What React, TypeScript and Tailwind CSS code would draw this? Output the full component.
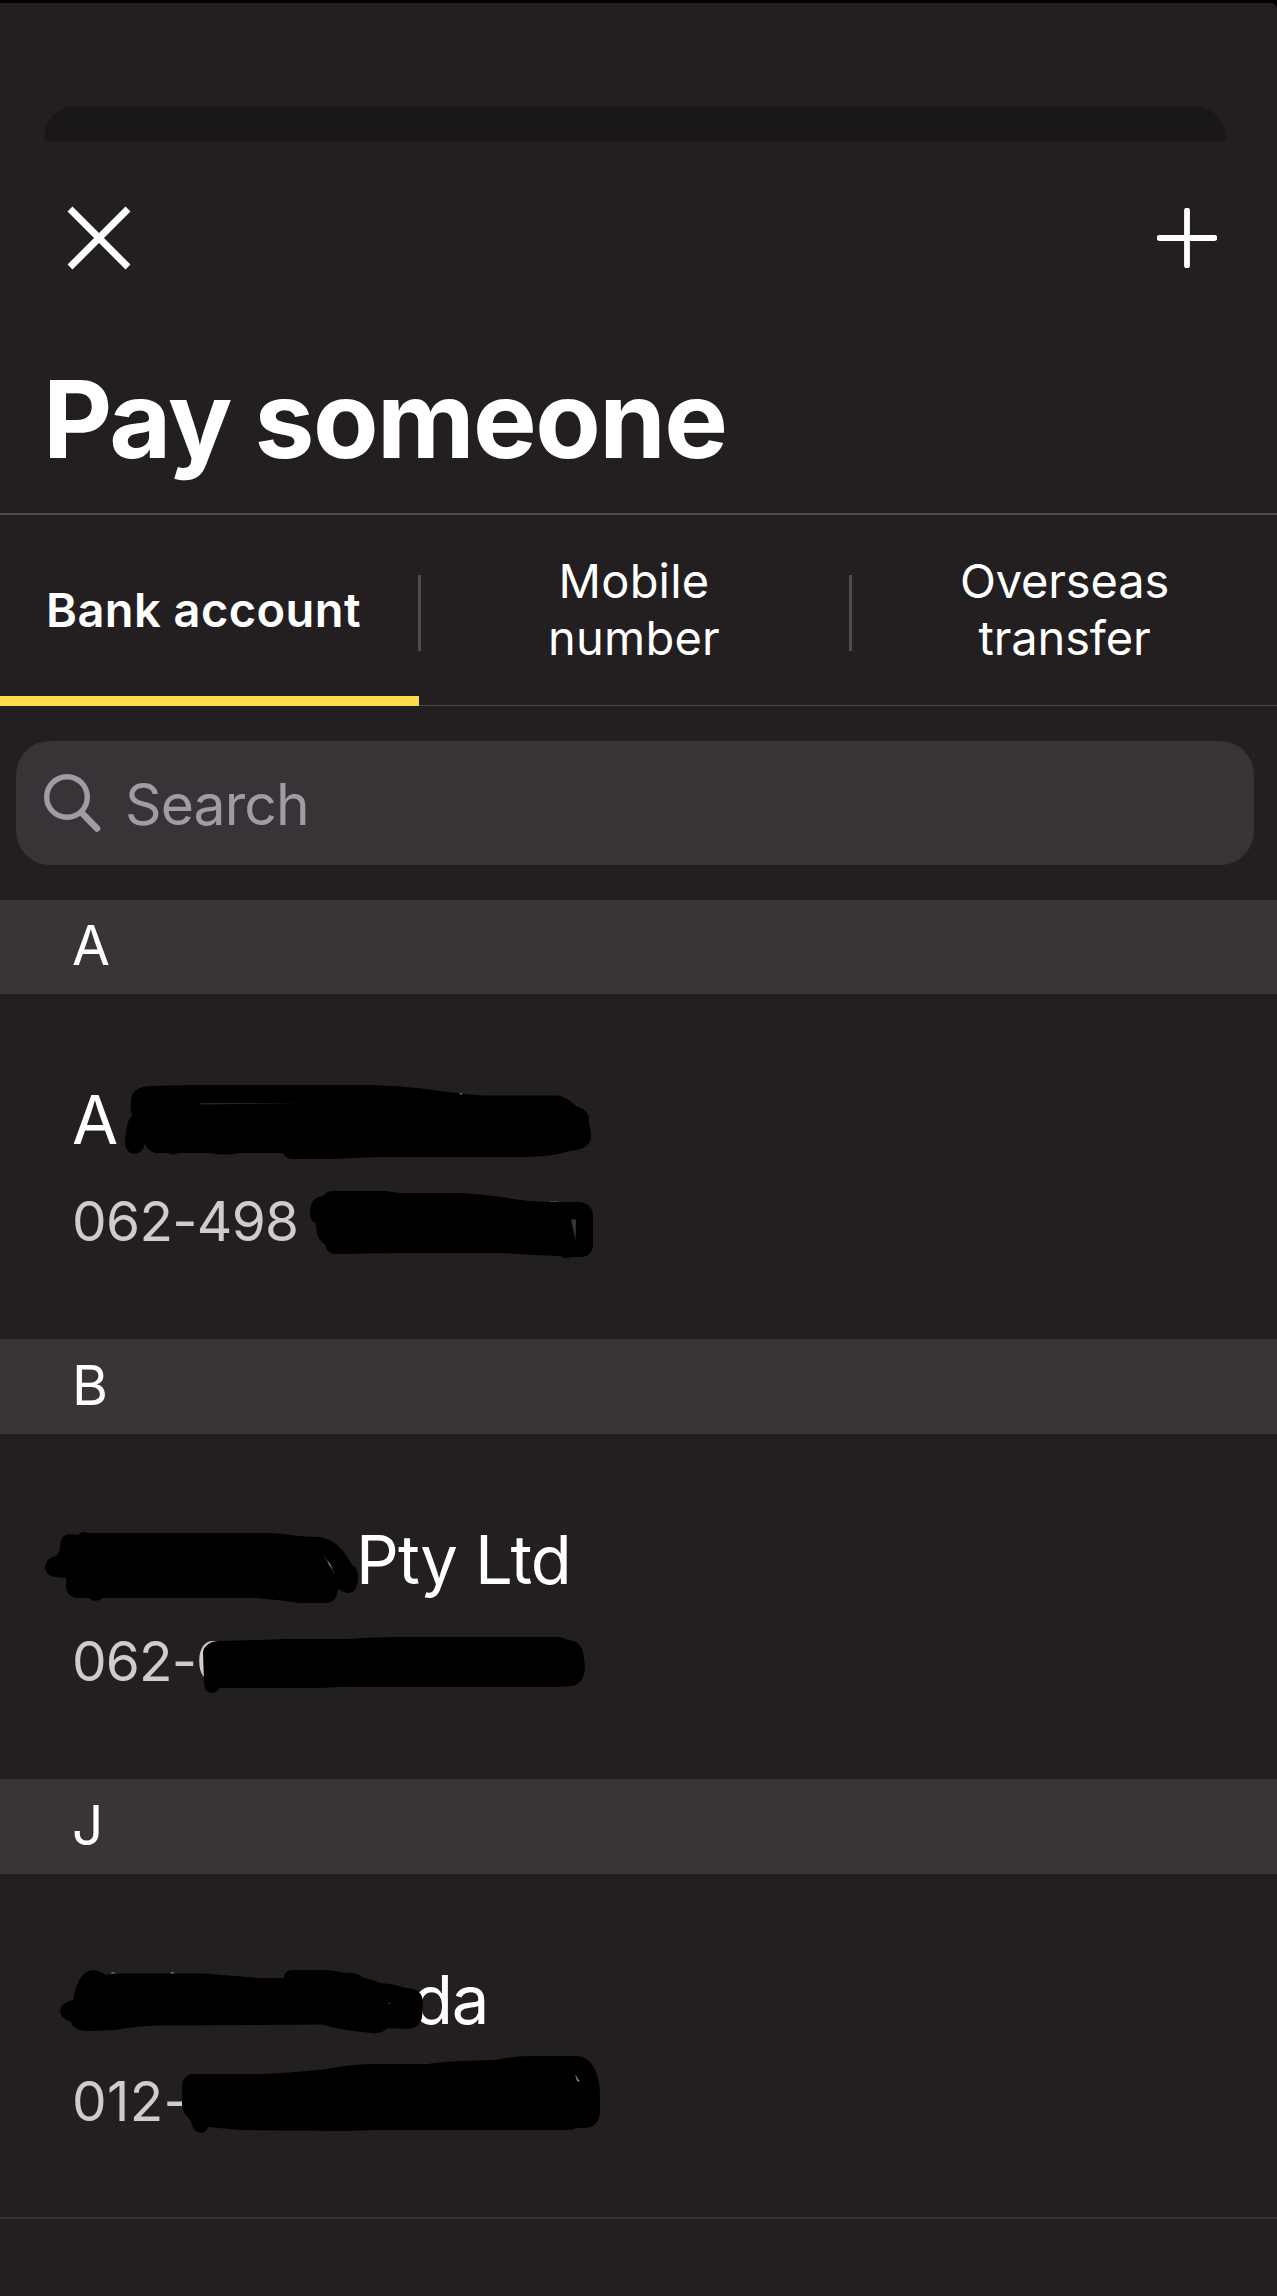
type Payee = {
  letter: string;
  name: string;
  nameClass: string;
  account: string;
  accountClass: string;
  headerClass: string;
  rowClass: string;
  viewBox: string;
  marks: string[];
  gaps: { d: string; fill: string }[];
};

const tabs = [
  { label: ['Bank account'], active: true, className: 'w-[418px] items-start pl-[46px] tracking-[0.43px]' },
  { label: ['Mobile', 'number'], active: false, className: 'w-[428px] items-center pr-[2px] pb-[2px] tracking-[0.2px]' },
  { label: ['Overseas', 'transfer'], active: false, className: 'flex-1 items-center pb-[2px] tracking-[-0.15px]' },
];

const payees: Payee[] = [
  {
    letter: 'A',
    name: 'A',
    nameClass: 'pl-[72px]',
    account: '062-498',
    accountClass: 'tracking-[-0.7px]',
    headerClass: 'h-[94px]',
    rowClass: 'h-[345px]',
    viewBox: '0 994 1277 345',
    marks: [
      'M131 1100Q132 1087 150 1086L190 1085H370C420 1086 450 1094 485 1095.5H558Q567 1097 576 1106Q590 1110 589 1122Q591 1130 591 1138Q590 1149 570 1151Q555 1156 530 1157H380L330 1159H292Q285 1158 283 1153H240Q225 1156 210 1153H178Q173 1156 168 1153H155Q146 1150 145 1143Q143 1154 134 1154Q125 1152 125 1143Q126 1120 132 1116Q130 1108 131 1100Z',
      'M310 1213Q310 1197 323 1196Q327 1191 332 1191H385L400 1193H460Q485 1194 520 1200Q540 1202 555 1202H580Q593 1204 593 1217V1245Q592 1257 580 1257H571Q566 1260 560 1256Q530 1255 500 1253H400L340 1254Q326 1255 325 1244Q316 1240 316 1223Q310 1221 310 1213Z',
    ],
    gaps: [
      { d: 'M199 1103L300 1103L202 1104.6Z', fill: '#2b2728' },
      { d: 'M571 1219.5H576L575.5 1240Z', fill: '#3a3637' },
      { d: 'M459 1093H463L461 1095Z', fill: '#666263' },
      { d: 'M550 1201H558V1202H550Z', fill: '#4a4647' },
    ],
  },
  {
    letter: 'B',
    name: 'Pty Ltd',
    nameClass: 'pl-[356px] tracking-[-0.9px]',
    account: '062-0',
    accountClass: 'tracking-[-0.9px]',
    headerClass: 'h-[95px]',
    rowClass: 'h-[345px]',
    viewBox: '0 1434 1277 345',
    marks: [
      'M45 1567Q46 1558 56 1556Q60 1553 60 1545Q61 1534 70 1534Q73 1534 77 1535Q83 1530 89 1533H270C290 1534 300 1537 318 1537C335 1538 345 1552 352 1565Q358 1568 358 1576Q358 1592 349 1593Q342 1592 338 1589Q337 1603 325 1603H300Q280 1600 255 1598H103Q95 1604 89 1598H76Q66 1596 66 1585V1578L55 1577Q45 1575 45 1567Z',
      'M203 1652Q205 1642 218 1641L260 1640L285 1639H350Q370 1637 400 1637H556Q563 1637 568 1640Q583 1641 584 1658L585 1668Q583 1685 572 1686L556 1687H340L320 1688H220Q216 1693 211 1693Q204 1692 204 1682Z',
    ],
    gaps: [
      { d: 'M323 1555Q332 1564 335 1575Q329 1566 323 1555Z', fill: '#2b2728' },
      { d: 'M328 1561L333 1569L329 1564Z', fill: '#d8d6d7' },
    ],
  },
  {
    letter: 'J',
    name: 'da',
    nameClass: 'pl-[412px] tracking-[-1.3px]',
    account: '012-',
    accountClass: 'tracking-[0.3px]',
    headerClass: 'h-[95px]',
    rowClass: 'h-[343px]',
    viewBox: '0 1874 1277 343',
    marks: [
      'M60 2011Q61 2002 73 2000Q78 1971 93 1970Q101 1971 106 1975Q110 1973.5 118 1973.5H205Q235 1976 258 1978H284Q284 1970 293 1970H320Q335 1970 345 1973Q356 1972 362 1977Q370 1979 380 1983Q395 1984 405 1988Q423 1988 423 2003L422 2018Q419 2029 408 2029L388 2028Q382 2034 372 2033Q345 2031 322 2024.5L160 2025.5Q135 2026 115 2030L90 2031Q73 2031 71 2022Q60 2018 60 2011Z',
      'M182 2085Q183 2075 193 2074H265Q300 2072 327 2069Q345 2065 370 2064H428Q445 2061 495 2060Q515 2056 530 2056H577C592 2057 600 2073 600 2095V2112Q599 2127 585 2128H576Q574 2130 568 2130H380L345 2131L240 2130L208 2127Q206 2133 200 2133Q193 2132 191 2121Q182 2112 182 2105Z',
    ],
    gaps: [
      { d: 'M110 1973.5L113 1972L116 1973.5Z', fill: '#777374' },
      { d: 'M170 1973.5L172 1971.5L175 1973.5Z', fill: '#777374' },
      { d: 'M388.5 2003L390 2002.5L390.5 2004H388.5Z', fill: '#3a3637' },
      { d: 'M575 2074L580 2082L577 2081Z', fill: '#8a8788' },
    ],
  },
];

function PayeeSection({ payee }: { payee: Payee }) {
  return (
    <section>
      <div className={`flex items-center bg-[#393536] pb-[3px] pl-[72px] text-[55px] leading-none ${payee.headerClass}`}>
        {payee.letter}
      </div>
      <div className={`relative pt-[86px] ${payee.rowClass}`}>
        <div className={`text-[67px] leading-[80px] ${payee.nameClass}`}>{payee.name}</div>
        <div className={`mt-[31px] pl-[72px] text-[55px] leading-[60px] text-[#cfcccd] ${payee.accountClass}`}>
          {payee.account}
        </div>
        {/* Marker strokes over the private details */}
        <svg className="absolute inset-0 h-full w-full" viewBox={payee.viewBox}>
          {payee.marks.map((d) => (
            <path key={d} d={d} fill="#000" />
          ))}
          {payee.gaps.map((gap) => (
            <path key={gap.d} d={gap.d} fill={gap.fill} />
          ))}
        </svg>
      </div>
    </section>
  );
}

export default function App() {
  return (
    <div className="h-[2296px] w-[1277px] overflow-hidden bg-black pt-[3px] font-['Inter',sans-serif] text-white">
      <div className="h-full rounded-tr-[6px] bg-[#231f20]">
        {/* Edge of the sheet behind */}
        <div className="pr-[51px] pl-[44px] pt-[103px]">
          <div className="h-[35px] rounded-t-[32px] bg-[#191717]" />
        </div>

        <div className="flex h-[194px] items-center justify-between pr-[60px] pl-[67px]">
          <svg width={64} height={64} viewBox="0 0 64 64" stroke="#fff" strokeWidth={7}>
            <path d="M3 3L61 61M61 3L3 61" />
          </svg>
          <svg width={60} height={60} viewBox="0 0 60 60" stroke="#fff" strokeWidth={5.8}>
            <path d="M30 2.5V57.5M2.5 30H57.5" strokeLinecap="round" />
          </svg>
        </div>

        <h1 className="mt-6 pb-[34px] pl-[43px] text-[107px] leading-[120px] font-bold tracking-[-1.6px]">
          Pay someone
        </h1>

        {/* Tabs */}
        <div className="flex h-[193px] items-stretch border-t-2 border-b border-t-[#4f4c4d] border-b-[#4f4c4d]">
          {tabs.map((tab, i) => (
            <div key={tab.label[0]} className={i < 2 ? 'flex' : 'flex flex-1'}>
              <div
                className={`relative flex flex-col justify-center text-[47px] leading-[57px] ${tab.className} ${
                  tab.active ? 'pb-px font-semibold' : ''
                }`}
              >
                {tab.label.map((line) => (
                  <span key={line}>{line}</span>
                ))}
                {tab.active && <div className="absolute -bottom-px left-0 h-[10px] w-[419px] bg-[#fddc4b]" />}
              </div>
              {i < 2 && <div className="mt-[60px] h-[76px] w-[3px] bg-[#4f4c4d]" />}
            </div>
          ))}
        </div>

        {/* Search field */}
        <div className="mt-[35px] mr-[23px] mb-[35px] ml-4 flex h-[124px] items-center rounded-[34px] bg-[#383337] pl-7 text-[#9f9ca3]">
          <svg width={57} height={58} viewBox="0 0 57 58" fill="none" stroke="currentColor">
            <circle cx={23} cy={23} r={20.3} strokeWidth={5.4} />
            <path d="M38 39L53 54.5" strokeWidth={6.6} strokeLinecap="round" />
          </svg>
          <span className="pt-[3px] pl-6 text-[57px] leading-[70px] tracking-[-0.89px]">Search</span>
        </div>

        {payees.map((payee) => (
          <PayeeSection key={payee.letter} payee={payee} />
        ))}
        <div className="h-[2px] bg-[#363233]" />
      </div>
    </div>
  );
}
